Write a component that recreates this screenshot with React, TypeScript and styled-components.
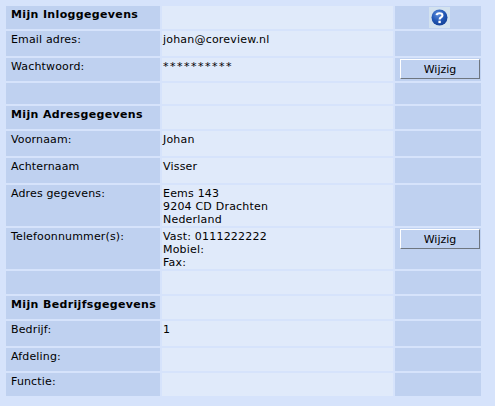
import styled, { createGlobalStyle } from 'styled-components';

const GlobalStyle = createGlobalStyle`
    html, body {
        margin: 0;
        background: #d6e3fb;
    }
`

function HelpIcon() {
    return (
        <HelpBox>
            <svg width="21" height="21" viewBox="0 0 21 21">
                <defs>
                    <radialGradient id="ball" cx="40%" cy="30%" r="75%">
                        <stop offset="0%" stopColor="#5f8fdc" />
                        <stop offset="55%" stopColor="#2257b5" />
                        <stop offset="100%" stopColor="#123f94" />
                    </radialGradient>
                </defs>
                <circle cx="10.5" cy="10.5" r="8" fill="url(#ball)" />
                <path d="M7.6 8.2 C7.8 5.6 13.4 5.4 13.4 8.4 C13.4 10.4 10.6 10.4 10.6 12.4" fill="none" stroke="#fff" strokeWidth="2.1" />
                <rect x="9.4" y="13.7" width="2.4" height="2.4" fill="#fff" />
            </svg>
        </HelpBox>
    )
}

type RowData = {
    label?: string;
    value?: string[];
    heading?: boolean;
    masked?: boolean;
    help?: boolean;
    edit?: boolean;
    height: number;
}

const rows: RowData[] = [
    { label: 'Mijn Inloggegevens', heading: true, help: true, height: 23 },
    { label: 'Email adres:', value: ['johan@coreview.nl'], height: 25 },
    { label: 'Wachtwoord:', value: ['**********'], masked: true, edit: true, height: 23 },
    { height: 21 },
    { label: 'Mijn Adresgegevens', heading: true, height: 23 },
    { label: 'Voornaam:', value: ['Johan'], height: 25 },
    { label: 'Achternaam', value: ['Visser'], height: 25 },
    { label: 'Adres gegevens:', value: ['Eems 143', '9204 CD Drachten', 'Nederland'], height: 41 },
    { label: 'Telefoonnummer(s):', value: ['Vast: 0111222222', 'Mobiel:', 'Fax:'], edit: true, height: 41 },
    { height: 23 },
    { label: 'Mijn Bedrijfsgegevens', heading: true, height: 23 },
    { label: 'Bedrijf:', value: ['1'], height: 25 },
    { label: 'Afdeling:', height: 23 },
    { label: 'Functie:', height: 23 },
]

export default function App() {
    return (
        <>
            <GlobalStyle />
            <Page>
                <Table>
                    <tbody>
                        {rows.map((row, i) => (
                            <Row key={i} $height={row.height}>
                                <LabelCell $heading={row.heading}>{row.label}</LabelCell>
                                <ValueCell>
                                    {row.value?.map((line) => <Line key={line} $masked={row.masked}>{line}</Line>)}
                                </ValueCell>
                                <ActionCell>
                                    {row.help && <HelpIcon />}
                                    {row.edit && <EditButton>Wijzig</EditButton>}
                                </ActionCell>
                            </Row>
                        ))}
                    </tbody>
                </Table>
            </Page>
        </>
    )
}

const Page = styled.div`
    width: 495px;
    height: 406px;
    padding: 4px;
    box-sizing: border-box;
    overflow: hidden;
    font-family: "DejaVu Sans", Verdana, sans-serif;
    font-size: 11px;
    line-height: 13px;
    color: #000;
`

const Table = styled.table`
    border-collapse: separate;
    border-spacing: 2px;
    table-layout: fixed;
    width: 479px;
`

const Row = styled.tr<{ $height: number }>`
    height: ${(p) => p.$height}px;
`

const LabelCell = styled.td<{ $heading?: boolean }>`
    width: 154px;
    padding: 2px 0 0 5px;
    box-sizing: border-box;
    vertical-align: top;
    background: #bfd1f0;
    font-weight: ${(p) => (p.$heading ? 'bold' : 'normal')};
    letter-spacing: ${(p) => (p.$heading ? '0.35px' : '0.15px')};
    white-space: nowrap;
`

const ValueCell = styled.td`
    width: 231px;
    padding: 2px 0 0 1px;
    box-sizing: border-box;
    vertical-align: top;
    background: #e0eafa;
`

const Line = styled.div<{ $masked?: boolean }>`
    letter-spacing: ${(p) => (p.$masked ? '1.5px' : '0.2px')};
`

const ActionCell = styled.td`
    width: 86px;
    padding: 1px 1px 0 5px;
    box-sizing: border-box;
    vertical-align: top;
    background: #bfd1f0;
`

const HelpBox = styled.span`
    display: block;
    width: 21px;
    height: 21px;
    margin-left: 29px;
    background: #d3e2ef;
`

const EditButton = styled.button`
    display: block;
    width: 80px;
    height: 20px;
    padding: 0;
    box-sizing: border-box;
    border: 1px solid;
    border-color: #fff #6e7680 #6e7680 #fff;
    background: #bfd1f0;
    font-family: inherit;
    font-size: 11px;
    color: #000;
`
